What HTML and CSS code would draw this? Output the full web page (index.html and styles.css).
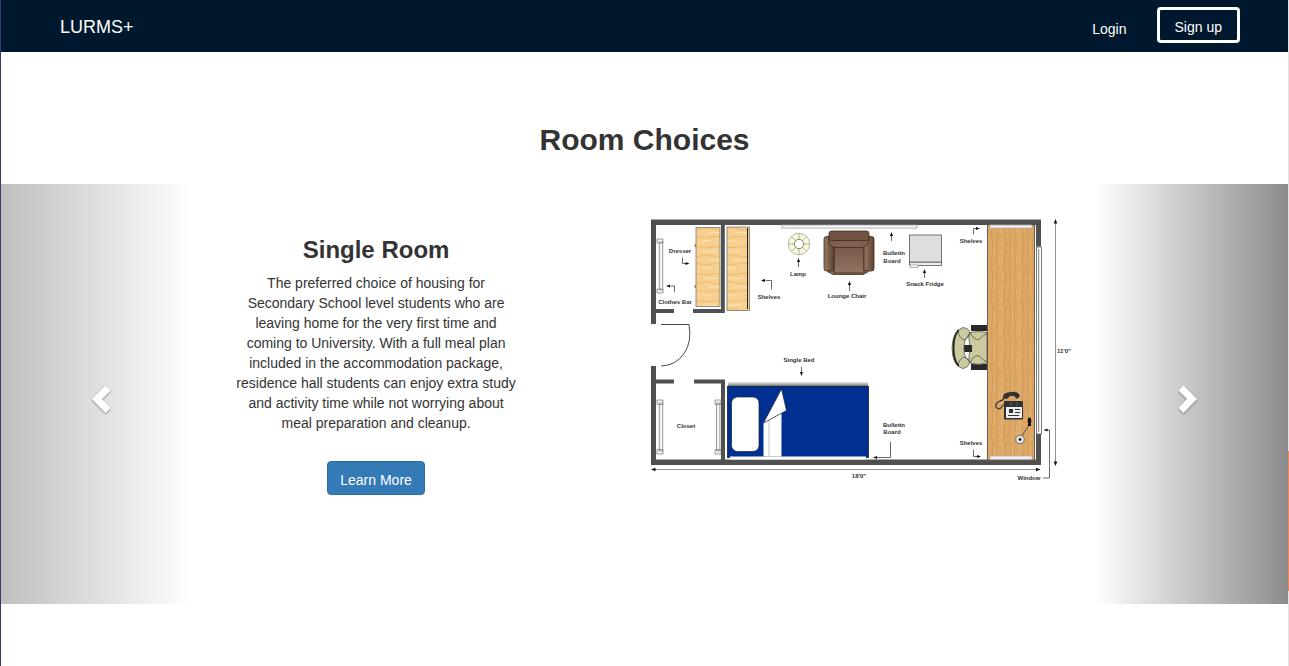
FILE: index.html
```html
<!DOCTYPE html>
<html lang="en">
<head>
<meta charset="utf-8">
<meta name="viewport" content="width=device-width, initial-scale=1">
<title>LURMS+</title>
<link rel="stylesheet" href="styles.css">
</head>
<body>
<nav class="navbar">
  <a class="brand" href="#">LURMS+</a>
  <div class="nav-links">
    <a class="login" href="#">Login</a>
    <button class="signup" type="button">Sign up</button>
  </div>
</nav>
<main class="rooms">
  <h2 class="rooms-title">Room Choices</h2>
  <section class="carousel" aria-label="Room choices">
    <div class="slide">
      <div class="slide-text">
        <h3 class="slide-title">Single Room</h3>
        <p class="slide-copy">The preferred choice of housing for Secondary School level students who are leaving home for the very first time and coming to University. With a full meal plan included in the accommodation package, residence hall students can enjoy extra study and activity time while not worrying about meal preparation and cleanup.</p>
        <button class="learn-more" type="button">Learn More</button>
      </div>
      <svg class="floor-plan" viewBox="640 210 440 280" role="img" aria-label="Single room floor plan">
        <defs>
          <pattern id="pine" width="25" height="27" patternUnits="userSpaceOnUse">
            <rect width="25" height="27" fill="#f7cf8e"/>
            <path d="M0 4q7 1 13 0t12 0M0 13q7-2 13 0t12 0M0 21q6 1 12 0t13 0" fill="none" stroke="#e9b566" stroke-width="1.200" opacity=".7"/>
            <path d="M3 8q6 1 14 0M9 17q6-1 13 0M2 25h9" fill="none" stroke="#fbdfae" stroke-width="1.500"/>
          </pattern>
          <pattern id="oak" width="18" height="34" patternUnits="userSpaceOnUse">
            <rect width="18" height="34" fill="#dda765"/>
            <path d="M2 0q2 8 0 17t0 17M7 0q-2 9 0 17t0 17M15 0q2 8 0 17t0 17" fill="none" stroke="#cb9250" stroke-width=".9" opacity=".7"/>
            <path d="M4 4q2 8 0 14M11 12q2 8 0 18M12 0v8M9 18v9" fill="none" stroke="#e8b97b" stroke-width="1"/>
          </pattern>
          <linearGradient id="seat" x2="0" y2="1"><stop stop-color="#725643"/><stop offset="1" stop-color="#917360"/></linearGradient>
          <linearGradient id="arm"><stop stop-color="#9a7a63"/><stop offset="1" stop-color="#5d4332"/></linearGradient>
          <linearGradient id="shadow" x2="0" y2="1"><stop stop-color="#eee"/><stop offset="1" stop-color="#555"/></linearGradient>
        </defs>

        <!-- walls -->
        <g fill="#505050">
          <path d="M651 219.500h390v27h-5v-21.500H656v99h-5zM651 366h5v93.500h380V434h5v31H651z"/>
          <path d="M721 225h3.800v88H693v-4h28zM656 309h18v4h-18zM656 379.500h18v4h-18zM694 379.500h31V460h-4v-76.500h-27z"/>
        </g>

        <!-- window -->
        <g fill="#fff" stroke="#555" stroke-width=".8"><rect x="1036.400" y="247" width="5" height="187"/><path d="M1038.700 249v183"/></g>

        <!-- clothes bars -->
        <g fill="#f4f4f4" stroke="#777" stroke-width=".7">
          <path d="M659.300 242h3.400v48h-3.400zM657 239h6v4h-6zM657 289h6v4h-6z"/>
          <path d="M659.300 403h3.400v48h-3.400zM657 400h6v4.500h-6zM657 449.500h6v4.500h-6z"/>
          <path d="M716.500 403h3.400v48h-3.400zM715 400h6v4.500h-6zM715 449.500h6v4.500h-6z"/>
        </g>

        <!-- dresser and shelves -->
        <g stroke="#777" stroke-width=".8">
          <rect x="696" y="227.500" width="24" height="79" fill="url(#pine)"/>
          <rect x="727" y="227" width="22.500" height="83.500" fill="url(#pine)"/>
        </g>
        <path d="M747.500 228v81" stroke="#222" stroke-width="1"/>
        <path d="M694.500 244h1.500v3h-1.500zM694.500 285h1.500v3h-1.500z" fill="#a98250"/>

        <!-- door -->
        <path d="M661 324.500h28q3 18-5 29-8 12-23 12.500" fill="none" stroke="#333" stroke-width=".9"/>

        <!-- bulletin boards -->
        <g fill="#fff" stroke="#999" stroke-width=".8"><rect x="782" y="225" width="135" height="3"/></g>

        <!-- lamp -->
        <g stroke="#999" stroke-width=".7">
          <circle cx="799" cy="244" r="10.700" fill="#fbfadb"/>
          <path d="M799 233v22M788 244h22M791.200 236.200l15.600 15.600M791.200 251.800l15.600-15.600"/>
          <circle cx="799" cy="244" r="4.700" fill="#fff" stroke="#555"/>
        </g>

        <!-- lounge chair -->
        <g stroke="#3d2a1e" stroke-width=".8">
          <path d="M828 266v6l5 2.500h30l5-2.500v-6z" fill="url(#seat)"/>
          <path d="M834 244h30v29h-30z" fill="url(#seat)"/>
          <rect x="824" y="236.500" width="10" height="34.500" rx="2.500" fill="url(#arm)"/>
          <rect x="864" y="236.500" width="10" height="34.500" rx="2.500" fill="url(#arm)"/>
          <path d="M829 236l4-2h31l5 2-1 8q-4 4-8 3.500h-23q-5 0-8-3.500z" fill="#7e614d"/>
          <rect x="829" y="231" width="40" height="9.500" rx="2.500" fill="#705340"/>
        </g>

        <!-- snack fridge -->
        <g stroke="#555" stroke-width=".8"><rect x="909.500" y="262" width="32" height="3.500" fill="#eee"/><path d="M910 265h8v2.500h-8z" fill="#fff" stroke="#999"/><rect x="909.500" y="235" width="32" height="27" fill="#dedede"/></g>

        <!-- desk -->
        <rect x="987.500" y="225" width="47" height="235" fill="url(#oak)" stroke="#6b604f" stroke-width="1"/>
        <g fill="#ededf2" stroke="#aaa" stroke-width=".6"><rect x="990" y="225" width="42" height="3"/><rect x="990" y="456" width="42" height="3.500"/></g>

        <!-- desk chair -->
        <path d="M971 325h16v6h-16zM971 364h16v6h-16zM963 345h9v7h-9z" fill="#292929"/>
        <g fill="#cbca9f" stroke="#444" stroke-width=".7">
          <path d="M970 332.500q8-2 17 0v30.500q-9 3-17 0-2-2-1-6 2-9 0-18-1-4 1-6.500z"/>
          <path d="M970 332.500q4 8 9 7 5-5 8-6M970 363q4-9 9-7 5 5 8 6" fill="none"/>
          <path d="M963 327.500q7 1 6.500 6-4 6-5 8-1 7 0 13 1 4 5 7 0 6-7 7-10-3-10.500-20 .5-18 11-21z"/>
          <path d="M958 331q1 8 7 9 4-3 4.500-6M958 366q1-8 7-9 4 2 4.500 5" fill="none"/>
        </g>
        <path d="M967 345h5v7h-5z" fill="#292929"/>
        <path d="M958.500 330q-5 6-5 18t5 18" fill="none" stroke="#222" stroke-width="1.800"/>

        <!-- telephone -->
        <path d="M1004 397q0 3-4 4-5 2-4 6 2 3 5 1 1-3 4-4" fill="none" stroke="#333" stroke-width="1.300"/>
        <path d="M1003 398q-1-5 7-6 9-1 10 4l-3 3-3-3h-4l-3 3z" fill="#333"/>
        <rect x="1004" y="401" width="19" height="18.500" rx="1" fill="#303136"/>
        <path d="M1006 407h16v11h-16z" fill="#eee"/>
        <path d="M1009 409h4v4h-4zM1015 409h5v1h-5zM1015 412h5v1h-5zM1008 415h11v1h-11z" fill="#333"/>
        <path d="M1011 402v4M1017 402v4" stroke="#666" stroke-width=".8"/>

        <!-- desk lamp -->
        <path d="M1020 439l9-14" stroke="#333" stroke-width=".8"/><ellipse cx="1029.500" cy="421" rx="1.800" ry="3.400" fill="#111"/><path d="M1028 424h3v2h-3z"/>
        <circle cx="1020" cy="439.500" r="4.300" fill="#e2e2ea" stroke="#555" stroke-width=".8"/><circle cx="1020" cy="439.500" r="1.300"/>

        <!-- bed -->
        <rect x="728" y="382" width="140" height="5" fill="url(#shadow)"/>
        <rect x="727.500" y="386.500" width="141" height="71" fill="#002f92" stroke="#123" stroke-width=".8"/>
        <rect x="730" y="456.500" width="136" height="3" fill="#fff"/>
        <rect x="731.500" y="397" width="27.500" height="54.500" rx="6" fill="#fff" stroke="#123" stroke-width=".7"/>
        <path d="M763.500 423l18-10v43.500h-18z" fill="#fff"/><path d="M769 420v36.500" stroke="#999" stroke-width=".6"/>
        <path d="M763.500 423l18-34 5 21.500z" fill="#fff" stroke="#223" stroke-width=".7"/>

        <!-- dimension lines -->
        <g stroke="#777" stroke-width=".8"><path d="M1055.500 222v241M653 469.500h385" fill="none"/></g>
        <path d="M1055.500 219l1.800 4.500h-3.600zM1055.500 466l1.800-4.500h-3.600zM651 469.500l4.500-1.800v3.600zM1040.500 469.500l-4.500-1.800v3.600z" fill="#111"/>

        <!-- pointers -->
        <g fill="none" stroke="#444" stroke-width=".8">
          <path d="M682.500 257.500v6h4M674.500 292v-6h-4M771.500 289.500v-9h-6M798.500 267v-5M849.500 291v-6M891.500 241v-5M924.500 278v-5M973.500 234.500v-6h3M801.500 367v5M890.500 442v15.500H877M973.500 449.500v7h4M1043 478h6.500v-48h-3"/>
        </g>
        <path d="M689.500 263.500l-4-1.600v3.200zM666 286l4-1.600v3.200zM761 280.500l4-1.600v3.200zM798.500 258l1.600 4h-3.200zM849.500 281l1.600 4h-3.200zM891.500 232l1.600 4h-3.200zM924.500 269l1.600 4h-3.200zM980 228.500l-4-1.600v3.200zM801.500 376l1.600-4h-3.200zM873 457.500l4-1.600v3.200zM981 456.500l-4-1.600v3.200zM1043.500 430l4-1.600v3.200z" fill="#111"/>

        <g class="plan-label">
          <text x="680" y="253">Dresser</text>
          <text x="675" y="304">Clothes Bar</text>
          <text x="769" y="299">Shelves</text>
          <text x="798" y="276">Lamp</text>
          <text x="847" y="298">Lounge Chair</text>
          <text x="894" y="255">Bulletin</text>
          <text x="892" y="263">Board</text>
          <text x="925" y="286">Snack Fridge</text>
          <text x="971" y="243">Shelves</text>
          <text x="799" y="362">Single Bed</text>
          <text x="686" y="428">Closet</text>
          <text x="894" y="427">Bulletin</text>
          <text x="892" y="434">Board</text>
          <text x="971" y="445">Shelves</text>
          <text x="859" y="478">18'0"</text>
          <text x="1064" y="353">11'0"</text>
          <text x="1029" y="480">Window</text>
        </g>
      </svg>
    </div>
    <button class="control control-prev" type="button" aria-label="Previous">
      <svg class="chevron" viewBox="0 0 40 40"><path d="M14 25L27.500 11.500L32.500 16.500L24 25L32.500 34L27.500 39z"/></svg>
    </button>
    <button class="control control-next" type="button" aria-label="Next">
      <svg class="chevron" viewBox="0 0 40 40"><path d="M26 25L12.500 11.500L7.500 16.500L16 25L7.500 34L12.500 39z"/></svg>
    </button>
  </section>
</main>
<div class="scroll-mark"></div>
</body>
</html>
```
FILE: styles.css
```css
* {
  box-sizing: border-box;
}

body {
  position: relative;
  margin: 0;
  min-height: 100vh;
  border-left: 1px solid #36396b;
  border-right: 1px solid #e2e2e2;
  background: #fff;
  color: #333;
  font: 14px/20px "Liberation Sans", Arial, sans-serif;
}

button {
  font: inherit;
  cursor: pointer;
}

.navbar {
  display: flex;
  align-items: center;
  justify-content: space-between;
  height: 52px;
  padding: 0 48px 2px 59px;
  background: #00182d;
}

.navbar a {
  color: #fff;
  text-decoration: none;
}

.brand {
  padding-top: 4px;
  font-size: 18px;
}

.nav-links {
  display: flex;
  align-items: center;
  gap: 30px;
}

.login {
  padding-top: 8px;
}

.signup {
  height: 36px;
  padding: 6px 15px 2px;
  border: 3px solid #fff;
  border-radius: 4px;
  background: transparent;
  color: #fff;
}

.rooms {
  padding-top: 71px;
}

.rooms-title {
  margin: 0 0 27px;
  font-size: 30px;
  line-height: 34px;
  text-align: center;
}

.carousel {
  position: relative;
  min-height: 420px;
}

.slide {
  display: grid;
  grid-template-columns: 364px 1fr;
  padding: 0 15%;
}

.slide-text {
  display: flex;
  flex-direction: column;
  align-items: center;
  padding-top: 53px;
  text-align: center;
}

.slide-title {
  margin: 0 0 10px;
  font-size: 24px;
  line-height: 26px;
}

.slide-copy {
  max-width: 286px;
  margin: 0 0 28px;
}

.learn-more {
  padding: 8px 12px 4px;
  border: 1px solid #2e6da4;
  border-radius: 4px;
  background: #337ab7;
  color: #fff;
}

.floor-plan {
  justify-self: end;
  width: 100%;
  max-width: 440px;
  margin: 26px 15px 0 0;
}

.plan-label {
  fill: #333;
  font-size: 6px;
  font-weight: bold;
  text-anchor: middle;
}

.control {
  position: absolute;
  top: 0;
  bottom: 0;
  display: flex;
  align-items: center;
  justify-content: center;
  width: 15%;
  padding: 0;
  border: 0;
}

.control-prev {
  left: 0;
  background: linear-gradient(to right, rgba(0, 0, 0, 0.25), rgba(0, 0, 0, 0));
}

.control-next {
  right: 0;
  background: linear-gradient(to right, rgba(0, 0, 0, 0), rgba(0, 0, 0, 0.45));
}

.chevron {
  width: 40px;
  height: 40px;
  fill: #fff;
  filter: drop-shadow(0 1px 1px rgba(0, 0, 0, 0.4));
}

.scroll-mark {
  position: fixed;
  top: 451px;
  right: 0;
  z-index: 1;
  width: 1px;
  height: 140px;
  background: #f08458;
}
```
